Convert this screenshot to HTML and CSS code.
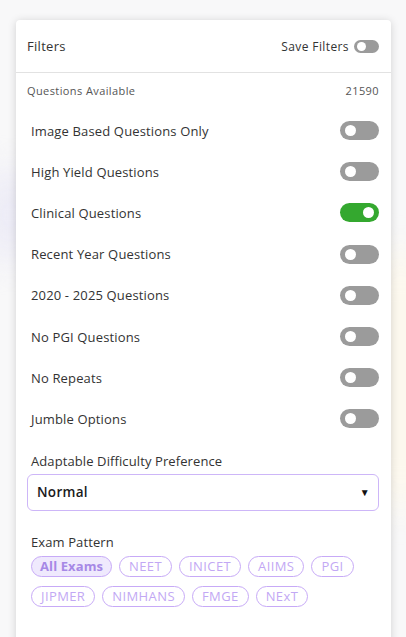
FILE: index.html
```html
<!DOCTYPE html>
<html lang="en">
<head>
    <meta charset="UTF-8">
    <meta name="viewport" content="width=device-width, initial-scale=1.0">
    <title>Filters</title>
    <link rel="stylesheet" href="styles.css">
</head>
<body>
    <div class="backdrop">
        <div class="blob blob-left"></div>
        <div class="blob blob-right"></div>

        <div class="filter-card">
            <div class="filter-header">
                <span class="filter-title">Filters</span>
                <label class="save-filters">
                    Save Filters
                    <span class="toggle toggle-small"></span>
                </label>
            </div>

            <div class="filter-body">
                <div class="available">
                    <span>Questions Available</span>
                    <span>21590</span>
                </div>

                <div class="option-list">
                    <div class="option-row"><span>Image Based Questions Only</span><span class="toggle"></span></div>
                    <div class="option-row"><span>High Yield Questions</span><span class="toggle"></span></div>
                    <div class="option-row"><span>Clinical Questions</span><span class="toggle on"></span></div>
                    <div class="option-row"><span>Recent Year Questions</span><span class="toggle"></span></div>
                    <div class="option-row"><span>2020 - 2025 Questions</span><span class="toggle"></span></div>
                    <div class="option-row"><span>No PGI Questions</span><span class="toggle"></span></div>
                    <div class="option-row"><span>No Repeats</span><span class="toggle"></span></div>
                    <div class="option-row"><span>Jumble Options</span><span class="toggle"></span></div>
                </div>

                <div class="section-label">Adaptable Difficulty Preference</div>
                <div class="select-box">
                    <span>Normal</span>
                    <span class="arrow">&#9660;</span>
                </div>

                <div class="section-label exam-label">Exam Pattern</div>
                <div class="chips">
                    <span class="chip active">All Exams</span>
                    <span class="chip">NEET</span>
                    <span class="chip">INICET</span>
                    <span class="chip">AIIMS</span>
                    <span class="chip">PGI</span>
                    <span class="chip">JIPMER</span>
                    <span class="chip">NIMHANS</span>
                    <span class="chip">FMGE</span>
                    <span class="chip">NExT</span>
                </div>
            </div>
        </div>
    </div>
</body>
</html>
```

FILE: styles.css
```css
* {
    box-sizing: border-box;
    margin: 0;
    padding: 0;
}

body {
    font-family: "Open Sans", "Liberation Sans", sans-serif;
    background: #f8f8f9;
    color: #333;
    overflow: hidden;
}

.backdrop {
    position: relative;
    min-height: 100vh;
    padding: 20px 15px 0 16px;
}

/* faint blurred page behind the panel */
.blob {
    position: absolute;
    border-radius: 40px;
    filter: blur(18px);
}

.blob-left {
    left: -20px;
    top: 170px;
    width: 60px;
    height: 90px;
    background: #ecebf6;
}

.blob-right {
    right: -20px;
    top: 250px;
    width: 50px;
    height: 260px;
    background: #fdf8ec;
}

.filter-card {
    position: relative;
    width: 375px;
    height: 640px;
    background: #fff;
    border-radius: 4px 4px 0 0;
    box-shadow: 0 1px 8px rgba(0, 0, 0, 0.16);
}

.filter-header {
    display: flex;
    align-items: center;
    justify-content: space-between;
    height: 53px;
    padding: 0 12px 0 11px;
    border-bottom: 1px solid #e2e2e2;
}

.filter-title {
    font-size: 13px;
    letter-spacing: 0.3px;
    color: #333;
}

.save-filters {
    display: flex;
    align-items: center;
    gap: 5px;
    font-size: 12px;
    letter-spacing: 0.4px;
    color: #333;
}

.filter-body {
    padding: 10px 12px 0 11px;
}

.available {
    display: flex;
    justify-content: space-between;
    font-size: 11px;
    letter-spacing: 0.4px;
    line-height: 16px;
    color: #555;
}

.option-list {
    margin-top: 11px;
}

.option-row {
    display: flex;
    align-items: center;
    justify-content: space-between;
    height: 41.2px;
    padding-left: 4px;
    font-size: 13px;
    letter-spacing: 0.15px;
    color: #333;
}

.toggle {
    position: relative;
    display: inline-block;
    width: 39px;
    height: 19px;
    border-radius: 10px;
    background: #9b9b9b;
}

.toggle::after {
    content: "";
    position: absolute;
    top: 4px;
    left: 5px;
    width: 11px;
    height: 11px;
    border-radius: 50%;
    background: #fff;
}

.toggle.on {
    background: #34a82f;
}

.toggle.on::after {
    left: 23px;
}

.toggle-small {
    width: 25px;
    height: 13px;
}

.toggle-small::after {
    top: 2px;
    left: 3px;
    width: 9px;
    height: 9px;
}

.section-label {
    margin-top: 13px;
    padding-left: 4px;
    font-size: 13px;
    letter-spacing: 0.1px;
    line-height: 16px;
    color: #333;
}

.select-box {
    display: flex;
    align-items: center;
    justify-content: space-between;
    height: 37px;
    margin-top: 5px;
    padding: 0 8px 0 9px;
    border: 1px solid #cdb6f8;
    border-radius: 6px;
    font-size: 13.5px;
    font-weight: 600;
    letter-spacing: 0.3px;
    color: #1a1a1a;
}

.arrow {
    font-size: 10px;
    color: #111;
}

.exam-label {
    margin-top: 23px;
}

.chips {
    display: flex;
    flex-wrap: wrap;
    gap: 9px 7px;
    margin-top: 6px;
    padding-left: 4px;
    width: 340px;
}

.chip {
    height: 21px;
    padding: 0 9px;
    border: 1px solid #c7aaf7;
    border-radius: 11px;
    font-size: 13px;
    letter-spacing: 0.4px;
    line-height: 19px;
    color: #c2a8f4;
}

.chip.active {
    background: #efe9fd;
    color: #a688e6;
    font-weight: 700;
    padding: 0 8px;
    letter-spacing: 0.1px;
}
```
